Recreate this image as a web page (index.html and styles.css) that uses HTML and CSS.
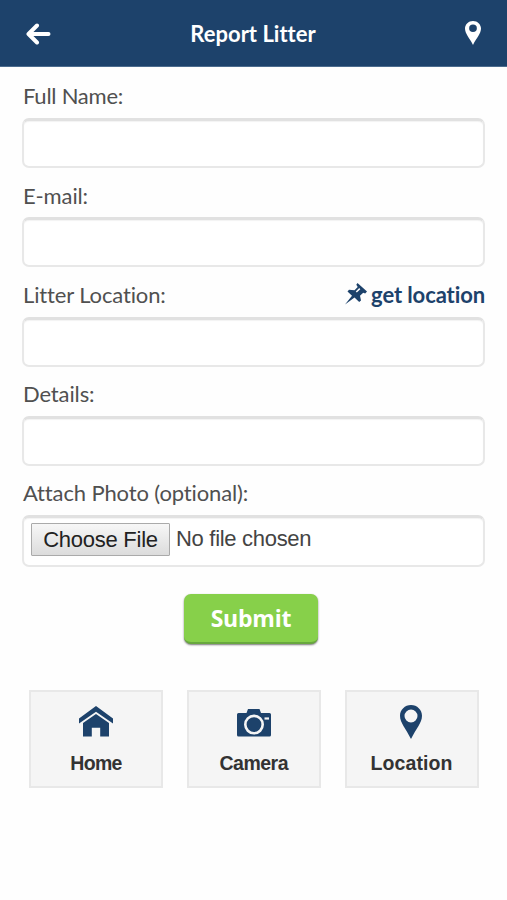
FILE: index.html
```html
<!DOCTYPE html>
<html lang="en">
<head>
<meta charset="utf-8">
<title>Report Litter</title>
<link rel="stylesheet" href="styles.css">
</head>
<body>
<header class="topbar">
  <a class="back" aria-label="Back"><svg width="26" height="22" viewBox="0 0 26 22"><path d="M12 2.500 3.500 11l8.500 8.500M4 11h19.500" fill="none" stroke="#fff" stroke-width="4" stroke-linecap="round" stroke-linejoin="round"/></svg></a>
  <h1 class="title"><span>Report Litter</span></h1>
  <a class="locate" aria-label="Location"><svg width="16" height="24" viewBox="0 0 22 34" preserveAspectRatio="none"><path fill="#fff" fill-rule="evenodd" d="M11 0C4.900 0 0 4.800 0 10.800 0 18 6 24 11 34 16 24 22 18 22 10.800 22 4.800 17.100 0 11 0ZM11 5a5.300 5.300 0 1 1 0 10.600 5.300 5.300 0 0 1 0-10.600Z"/></svg></a>
</header>
<form class="form">
  <div class="row"><label class="t-name" for="name">Full Name:</label></div>
  <input class="field" id="name">
  <div class="row low"><label class="t-email" for="email">E-mail:</label></div>
  <input class="field" id="email">
  <div class="row low"><label class="t-loc" for="loc">Litter Location:</label>
    <a class="get"><svg width="22" height="22" viewBox="0 0 22 22"><path fill="#1d426b" d="m12.500 0 9.500 8.500-1.800 2-2-.8-3.200 3 1 4.800-1.800 1.500-4.700-4.500L0 21.500l7-8.800L2.500 8.500 4 6.700l5.500.6L12.700 4l-1.400-2.300Z"/><path d="m11.300 9 3.500-3.400" stroke="#fff" stroke-width="1.500"/></svg><span class="t-get">get location</span></a>
  </div>
  <input class="field" id="loc">
  <div class="row"><label class="t-details" for="details">Details:</label></div>
  <input class="field" id="details">
  <div class="row"><label class="t-photo">Attach Photo (optional):</label></div>
  <div class="field file"><button type="button" class="choose"><span>Choose File</span></button><span class="none">No file chosen</span></div>
  <button type="button" class="submit"><span>Submit</span></button>
</form>
<nav class="tiles">
  <a class="tile"><svg width="34" height="31" viewBox="0 0 34 31"><path fill="#1d426b" d="M17 0 34 12.500V17.500L17 5.800 0 17.500V12.500ZM17 8 30 17v13.500h-8.800v-8.700h-8.400v8.700H4V17Z"/></svg><span class="t-home">Home</span></a>
  <a class="tile"><svg width="34" height="31" viewBox="0 0 34 31"><path fill="#1d426b" d="M1.500 7H9.500l1.500-4h11.500l1.500 4h8.500Q34 7 34 8.500v20.500q0 1.500-1.500 1.500h-31Q0 30.500 0 29V8.500Q0 7 1.500 7Z"/><circle cx="17" cy="18.600" r="8.700" fill="#1d426b" stroke="#f5f5f5" stroke-width="2.600"/><path d="M27.500 12.500h4.500" stroke="#f5f5f5" stroke-width="2.200"/></svg><span class="t-camera">Camera</span></a>
  <a class="tile"><svg width="22" height="34" viewBox="0 0 22 34"><path fill="#1d426b" fill-rule="evenodd" d="M11 0C4.900 0 0 4.800 0 10.800 0 18 6 24 11 34 16 24 22 18 22 10.800 22 4.800 17.100 0 11 0ZM11 4.500a6.500 6.500 0 1 1 0 13 6.500 6.500 0 0 1 0-13Z"/></svg><span class="t-location">Location</span></a>
</nav>
</body>
</html>
```
FILE: styles.css
```css
* { box-sizing: border-box; }
body { margin: 0; background: #fefefe; font-family: Lato, sans-serif; color: #505050; font-variant-ligatures: none; }
.topbar { height: 67px; background: #1d426b; border-bottom: 1px solid #4c6c8e; display: grid; grid-template-columns: 60px 1fr 60px; align-items: center; padding: 1px 26px 0 25px; }
.topbar svg { display: block; }
.locate { justify-self: end; margin-bottom: 2px; }
.title { margin: 0; font-size: 22px; line-height: 30px; font-weight: 700; color: #fff; text-align: center; white-space: nowrap; letter-spacing: 0; }
.form { padding: 2px 22px 0; display: flex; flex-direction: column; }
.row { height: 49.200px; padding: 12px 0 0 1px; display: flex; justify-content: space-between; font-size: 22px; line-height: 30px; white-space: nowrap; letter-spacing: -.13px; }
.low { padding-top: 13px; }
.t-name { letter-spacing: -.25px; }
.get { display: flex; align-items: flex-start; gap: 4px; color: #1d426b; font-weight: 700; letter-spacing: -.1px; }
.get svg { margin-top: 3px; }
.field { width: 100%; height: 50px; border: 2px solid #e8e8e8; border-top: 3px solid #e1e1e1; border-radius: 7px; background: #fff; outline: 0; box-shadow: inset 0 1px 1px #f3f3f3; }
.file { height: 52px; padding: 5px 7px 0; display: flex; align-items: flex-start; gap: 6px; font: 22px/31px "Liberation Sans", Arial, sans-serif; color: #444; white-space: nowrap; letter-spacing: -.3px; }
.choose { width: 139px; height: 33px; padding: 0 0 2px; border: 1.500px solid #aaa; border-radius: 1px; background: linear-gradient(#f7f7f7, #dcdcdc); font: inherit; letter-spacing: -.25px; color: #222; }
.submit { align-self: center; margin: 27px 5px 0 0; width: 134px; height: 50px; border: 0; border-bottom: 2px solid #68a83e; border-radius: 7px; background: #87d04a; box-shadow: 0 1px 2px #777; color: #fff; font: 700 23px/46px "Open Sans", sans-serif; letter-spacing: -.2px; padding: 0; }
.tiles { margin: 46px 28.500px 0 29px; display: grid; grid-template-columns: repeat(3, 134px); justify-content: space-between; }
.tile { height: 98px; border: 2px solid #e8e8e8; background: #f5f5f5; display: grid; grid-template-rows: 58px 26px; justify-content: center; justify-items: center; align-items: center; font: 700 19.500px/26px "Liberation Sans", Arial, sans-serif; color: #333; }
.tile svg { margin-top: 2px; }
.t-home { letter-spacing: -.7px; }
.t-camera { letter-spacing: -.5px; }
.t-location { letter-spacing: .1px; }
```
